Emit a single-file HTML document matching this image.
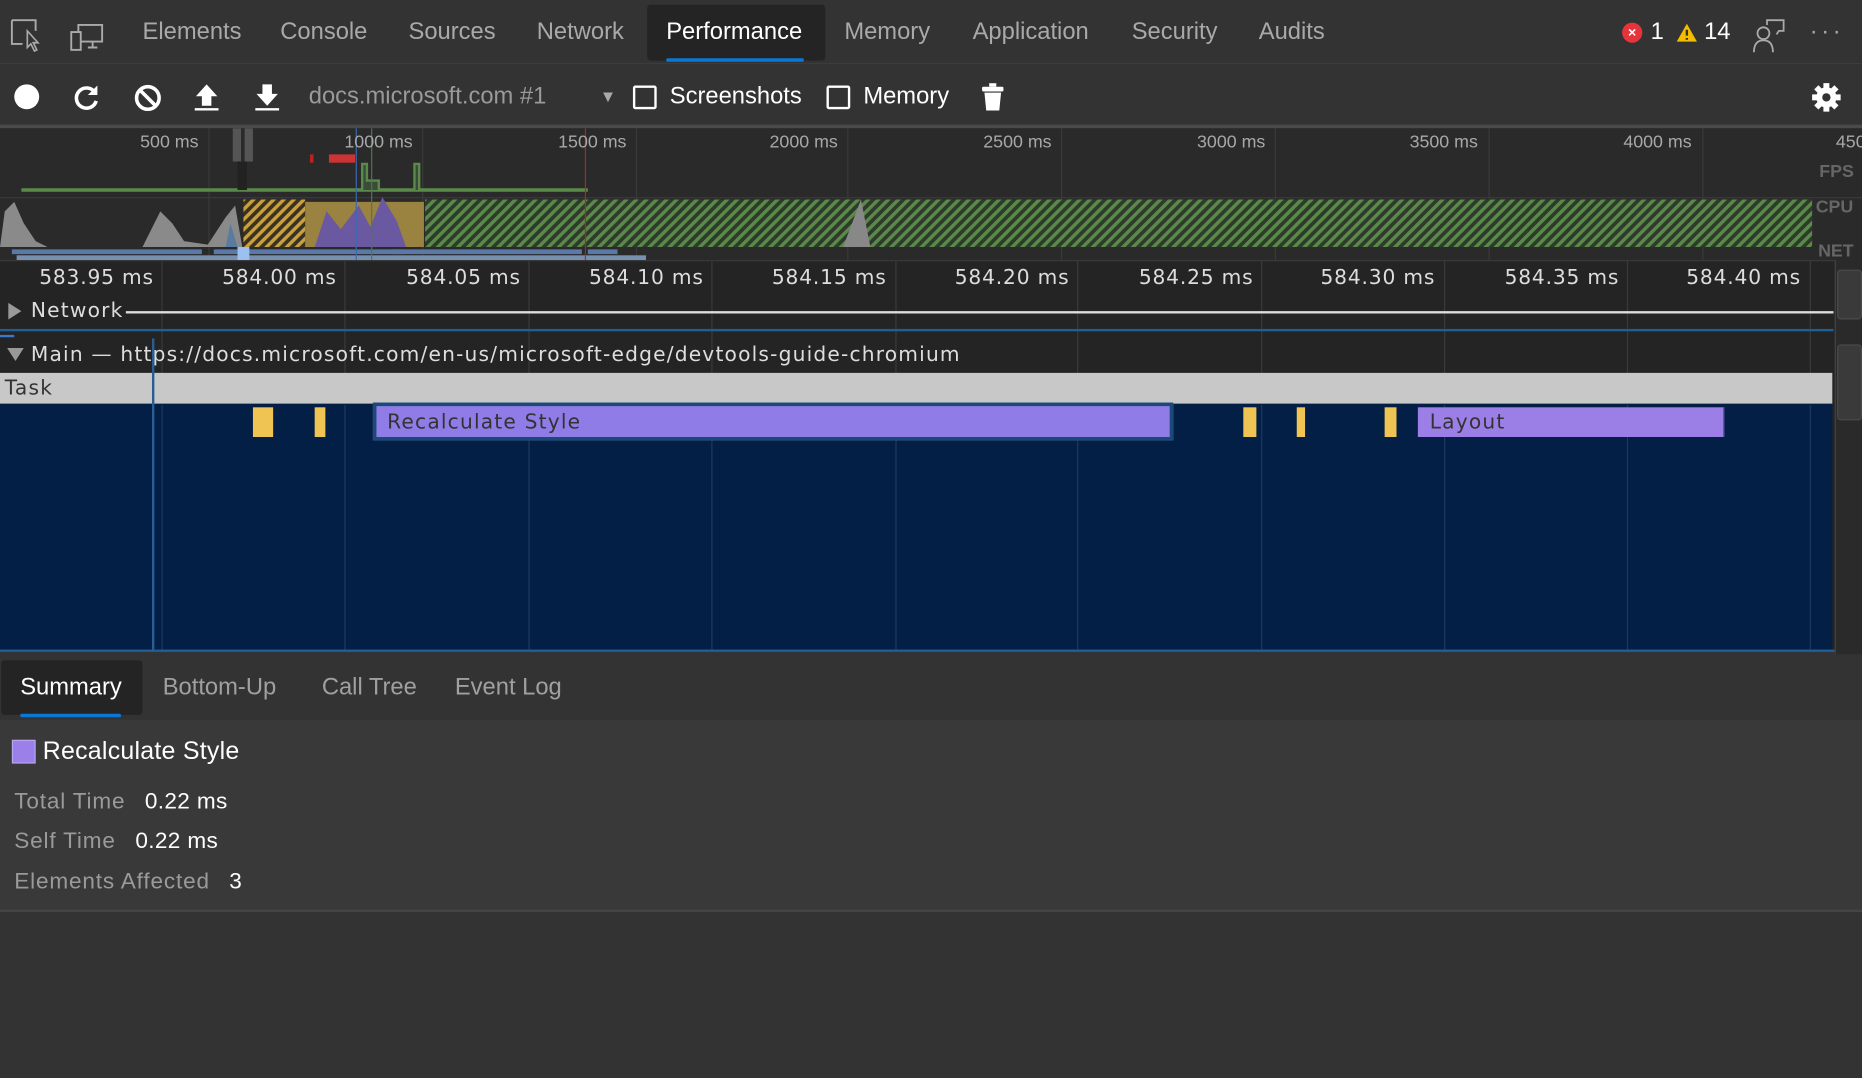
<!DOCTYPE html>
<html><head><meta charset="utf-8"><style>
*{margin:0;padding:0;box-sizing:border-box}
html,body{width:1862px;height:1078px;overflow:hidden;background:#333}
#w{width:1568px;height:908px;transform:scale(1.1875);transform-origin:0 0;position:relative;background:#333;font-family:"Liberation Sans",sans-serif;overflow:hidden}
.a{position:absolute}
.tab{position:absolute;top:16px;font-size:20px;color:#a9a9a9}
.ms{position:absolute;font-size:15px;color:#a8a8a8}
.rl{position:absolute;top:224px;font-family:"DejaVu Sans",sans-serif;font-size:17px;color:#ddd;letter-spacing:0.7px}
.dv{font-family:"DejaVu Sans",sans-serif;font-size:17px;letter-spacing:1px}
.vl{position:absolute;width:1px;background:#3a3a3a}
.fl{position:absolute;top:341px;height:207px;width:1px;background:#1c3a60}
.y{position:absolute;top:343px;height:25px;background:#f0c453}
.sl{position:absolute;font-size:19px;color:#9a9a9a;letter-spacing:0.7px}
.sv{position:absolute;font-size:19px;color:#fff;letter-spacing:0.3px}
</style></head><body><div id="w">
<div class="a" style="left:0;top:0;width:1568px;height:54px;background:#333;border-bottom:1px solid #3c3c3c"></div>
<svg class="a" style="left:6px;top:14px" width="34" height="30" viewBox="0 0 34 30"><path d="M4 3h20v9M4 3v20h9" fill="none" stroke="#aaa" stroke-width="1.6"/><path d="M17 12l0 14 3-3 3 6 2-1-3-6 4 0z" fill="none" stroke="#aaa" stroke-width="1.4"/></svg>
<svg class="a" style="left:58px;top:18px" width="32" height="26" viewBox="0 0 32 26"><rect x="8" y="3" width="20" height="14" fill="none" stroke="#aaa" stroke-width="1.6"/><rect x="2" y="9" width="8" height="15" fill="#333" stroke="#aaa" stroke-width="1.6"/><path d="M16 22h8M20 17v5" stroke="#aaa" stroke-width="1.6"/></svg>
<div class="tab" style="left:120px">Elements</div>
<div class="tab" style="left:236px">Console</div>
<div class="tab" style="left:344px">Sources</div>
<div class="tab" style="left:452px">Network</div>
<div class="a" style="left:545px;top:4px;width:150px;height:47px;background:#242424;border-radius:3px"></div>
<div class="a" style="left:561px;top:49px;width:116px;height:3px;background:#0a78d4;border-radius:2px"></div>
<div class="tab" style="left:561px;color:#fff">Performance</div>
<div class="tab" style="left:711px">Memory</div>
<div class="tab" style="left:819px">Application</div>
<div class="tab" style="left:953px">Security</div>
<div class="tab" style="left:1060px">Audits</div>
<div class="a" style="left:1366px;top:19px;width:17px;height:17px;border-radius:50%;background:#e5343b;color:#fff;font-size:12px;line-height:17px;text-align:center;font-weight:bold">×</div>
<div class="tab" style="left:1390px;color:#fff">1</div>
<svg class="a" style="left:1411px;top:19px" width="19" height="17"><path d="M9.5 1L18 16H1z" fill="#f4bd00"/><path d="M9.5 6v5M9.5 13v1.5" stroke="#333" stroke-width="2"/></svg>
<div class="tab" style="left:1435px;color:#fff">14</div>
<svg class="a" style="left:1472px;top:15px" width="32" height="30" viewBox="0 0 32 30"><circle cx="13" cy="13" r="5" fill="none" stroke="#aaa" stroke-width="1.5"/><path d="M5 29c0-7 3-10 8-10s8 3 8 10" fill="none" stroke="#aaa" stroke-width="1.5"/><path d="M16 6V2h14v9h-4l-2 3" fill="none" stroke="#aaa" stroke-width="1.5"/></svg>
<div class="a" style="left:1524px;top:16px;color:#aaa;font-size:20px;letter-spacing:3px">···</div>
<div class="a" style="left:0;top:105px;width:1568px;height:3px;background:#4a4a4a"></div>
<div class="a" style="left:12px;top:71px;width:21px;height:21px;border-radius:50%;background:#fff"></div>
<svg class="a" style="left:61px;top:70px" width="24" height="24" viewBox="0 0 24 24"><path d="M19 8A8.5 8.5 0 1 0 20 15" fill="none" stroke="#fff" stroke-width="3"/><path d="M21 2v8h-8z" fill="#fff"/></svg>
<svg class="a" style="left:112px;top:70px" width="25" height="25" viewBox="0 0 25 25"><circle cx="12.5" cy="12.5" r="9.5" fill="none" stroke="#fff" stroke-width="3"/><path d="M6 6l13 13" stroke="#fff" stroke-width="3"/></svg>
<svg class="a" style="left:163px;top:70px" width="22" height="24" viewBox="0 0 22 24"><path d="M11 1L20 11H15v8H7v-8H2z" fill="#fff"/><path d="M1 22h20" stroke="#fff" stroke-width="2"/></svg>
<svg class="a" style="left:214px;top:70px" width="22" height="24" viewBox="0 0 22 24"><path d="M11 19L20 9H15V1H7v8H2z" fill="#fff"/><path d="M1 22h20" stroke="#fff" stroke-width="2"/></svg>
<div class="a" style="left:260px;top:70px;font-size:20px;color:#9a9a9a">docs.microsoft.com #1</div>
<div class="a" style="left:505px;top:73px;font-size:14px;color:#aaa">▼</div>
<div class="a" style="left:533px;top:72px;width:20px;height:20px;border:2px solid #fff;border-radius:2px"></div>
<div class="a" style="left:564px;top:70px;font-size:20px;color:#fff">Screenshots</div>
<div class="a" style="left:696px;top:72px;width:20px;height:20px;border:2px solid #fff;border-radius:2px"></div>
<div class="a" style="left:727px;top:70px;font-size:20px;color:#fff">Memory</div>
<svg class="a" style="left:826px;top:70px" width="20" height="24" viewBox="0 0 20 24"><rect x="7" y="0" width="6" height="3" fill="#fff"/><rect x="1" y="3" width="18" height="4" rx="1" fill="#fff"/><path d="M3 8h14l-1.5 15h-11z" fill="#fff"/></svg>
<svg class="a" style="left:1525px;top:69px" width="26" height="26" viewBox="0 0 26 26"><g fill="#fff"><circle cx="13" cy="13" r="8.5"/><rect x="10.5" y="1" width="5" height="24"/><rect x="1" y="10.5" width="24" height="5"/><rect x="10.5" y="1" width="5" height="24" transform="rotate(45 13 13)"/><rect x="10.5" y="1" width="5" height="24" transform="rotate(-45 13 13)"/></g><circle cx="13" cy="13" r="3.5" fill="#333"/></svg>
<div class="a" style="left:0;top:108px;width:1568px;height:112px;background:#2a2a2a"></div>
<svg class="a" style="left:0;top:108px" width="1568" height="112" viewBox="0 0 1568 112">
<defs><pattern id="g" width="6" height="6" patternUnits="userSpaceOnUse" patternTransform="rotate(45)"><rect width="3" height="6" fill="#5a8a4a"/><rect x="3" width="3" height="6" fill="#2e3a2a"/></pattern>
<pattern id="o" width="6" height="6" patternUnits="userSpaceOnUse" patternTransform="rotate(45)"><rect width="3" height="6" fill="#c9a040"/><rect x="3" width="3" height="6" fill="#3a3220"/></pattern></defs>
<g stroke="#3a3a3a"><path d="M176 0v112M356 0v112M536 0v112M714 0v112M894 0v112M1074 0v112M1254 0v112M1434 0v112"/></g>
<rect x="0" y="58" width="1568" height="1" fill="#3a3a3a"/>
<rect x="358" y="60" width="1168" height="40" fill="url(#g)"/>
<rect x="205" y="60" width="52" height="40" fill="url(#o)"/>
<path d="M0 100L4 70 12 62 20 80 30 95 40 100 120 100 135 70 145 80 155 95 175 98 190 75 198 65 204 100z" fill="#8a8a8a"/>
<path d="M257 100V62h100v38z" fill="#9a8240"/>
<path d="M265 100l10-30 12 15 15-20 10 18 10-25 12 20 8 22z" fill="#6a58a0"/>
<path d="M190 100l4-20 6 20z" fill="#5a7aa0"/>
<path d="M710 100l15-40 8 40z" fill="#888"/>
<path d="M18 52h477" stroke="#5a8a4a" stroke-width="3"/>
<path d="M305 52V30h4v14h10v8h30V30h4v22" fill="#3c4a3a" stroke="#5a8a4a" stroke-width="2"/>
<rect x="196" y="0" width="7" height="28" fill="#555"/><rect x="206" y="0" width="7" height="28" fill="#555"/>
<rect x="200" y="28" width="8" height="24" fill="#222"/>
<rect x="261" y="22" width="3" height="7" fill="#b22"/><rect x="277" y="22" width="22" height="7" fill="#c33"/>
<rect x="10" y="102" width="160" height="4" fill="#5a78a8"/><rect x="180" y="102" width="160" height="4" fill="#5a78a8"/><rect x="330" y="102" width="160" height="4" fill="#5a78a8"/><rect x="495" y="102" width="25" height="4" fill="#5a78a8"/>
<rect x="14" y="107" width="530" height="4" fill="#7890b0"/>
<rect x="200" y="100" width="10" height="12" fill="#9cc0f0"/>
<path d="M300 0v112" stroke="#3a6ab0"/><path d="M313 0v112" stroke="#4a7a4a"/><path d="M493 0v112" stroke="#b22"/>
</svg>
<div class="ms" style="left:118px;top:111px">500 ms</div>
<div class="ms" style="left:290px;top:111px">1000 ms</div>
<div class="ms" style="left:470px;top:111px">1500 ms</div>
<div class="ms" style="left:648px;top:111px">2000 ms</div>
<div class="ms" style="left:828px;top:111px">2500 ms</div>
<div class="ms" style="left:1008px;top:111px">3000 ms</div>
<div class="ms" style="left:1187px;top:111px">3500 ms</div>
<div class="ms" style="left:1367px;top:111px">4000 ms</div>
<div class="ms" style="left:1546px;top:111px">450</div>
<div class="ms" style="left:1532px;top:136px;font-weight:bold;color:#666">FPS</div>
<div class="ms" style="left:1529px;top:166px;font-weight:bold;color:#666">CPU</div>
<div class="ms" style="left:1531px;top:203px;font-weight:bold;color:#666">NET</div>
<div class="a" style="left:0;top:219px;width:1545px;height:330px;background:#242424;border-top:1px solid #3a3a3a"></div>
<div class="vl" style="left:136px;top:220px;height:120px"></div><div class="vl" style="left:290px;top:220px;height:120px"></div><div class="vl" style="left:445px;top:220px;height:120px"></div><div class="vl" style="left:599px;top:220px;height:120px"></div><div class="vl" style="left:754px;top:220px;height:120px"></div><div class="vl" style="left:907px;top:220px;height:120px"></div><div class="vl" style="left:1062px;top:220px;height:120px"></div><div class="vl" style="left:1216px;top:220px;height:120px"></div><div class="vl" style="left:1370px;top:220px;height:120px"></div><div class="vl" style="left:1524px;top:220px;height:120px"></div>
<div class="rl" style="left:33px">583.95 ms</div><div class="rl" style="left:187px">584.00 ms</div><div class="rl" style="left:342px">584.05 ms</div><div class="rl" style="left:496px">584.10 ms</div><div class="rl" style="left:650px">584.15 ms</div><div class="rl" style="left:804px">584.20 ms</div><div class="rl" style="left:959px">584.25 ms</div><div class="rl" style="left:1112px">584.30 ms</div><div class="rl" style="left:1267px">584.35 ms</div><div class="rl" style="left:1420px">584.40 ms</div>
<div class="a" style="left:7px;top:255px;width:0;height:0;border-top:7px solid transparent;border-bottom:7px solid transparent;border-left:11px solid #999"></div>
<div class="a dv" style="left:26px;top:252px;color:#ddd">Network</div>
<div class="a" style="left:106px;top:262px;width:1438px;height:2px;background:#ddd"></div>
<div class="a" style="left:0;top:277px;width:1544px;height:2px;background:#1e5f98"></div>
<div class="a" style="left:0;top:282px;width:12px;height:2px;background:#3a78d0"></div>
<div class="a" style="left:6px;top:293px;width:0;height:0;border-left:7px solid transparent;border-right:7px solid transparent;border-top:11px solid #999"></div>
<div class="a dv" style="left:26px;top:289px;color:#ddd">Main — https://docs.microsoft.com/en-us/microsoft-edge/devtools-guide-chromium</div>
<div class="a" style="left:0;top:314px;width:1543px;height:26px;background:#c8c8c8"></div>
<div class="a dv" style="left:4px;top:317px;color:#333">Task</div>
<div class="a" style="left:0;top:340px;width:1543px;height:208px;background:#041f45"></div>
<div class="fl" style="left:136px"></div><div class="fl" style="left:290px"></div><div class="fl" style="left:445px"></div><div class="fl" style="left:599px"></div><div class="fl" style="left:754px"></div><div class="fl" style="left:907px"></div><div class="fl" style="left:1062px"></div><div class="fl" style="left:1216px"></div><div class="fl" style="left:1370px"></div><div class="fl" style="left:1524px"></div>
<div class="y" style="left:213px;width:17px"></div><div class="y" style="left:265px;width:9px"></div>
<div class="y" style="left:1047px;width:11px"></div><div class="y" style="left:1092px;width:7px"></div><div class="y" style="left:1166px;width:10px"></div>
<div class="a" style="left:314px;top:339px;width:674px;height:32px;background:#8f7ce6;border:3px solid #1c4a78"></div>
<div class="a dv" style="left:326px;top:346px;color:#333">Recalculate Style</div>
<div class="a" style="left:1194px;top:343px;width:258px;height:25px;background:#9b7fe6;border-right:1px solid #6050b0"></div>
<div class="a dv" style="left:1204px;top:346px;color:#333">Layout</div>
<div class="a" style="left:128px;top:285px;width:2px;height:264px;background:#2a5e92"></div>
<div class="a" style="left:0;top:547px;width:1545px;height:2px;background:#1e5f98"></div>
<div class="a" style="left:1545px;top:219px;width:23px;height:332px;background:#2a2a2a;border-left:1px solid #444"></div>
<div class="a" style="left:1547px;top:227px;width:21px;height:42px;background:#3a3a3a;border:1px solid #4a4a4a;border-radius:3px"></div>
<div class="a" style="left:1547px;top:290px;width:21px;height:64px;background:#3a3a3a;border:1px solid #4a4a4a;border-radius:3px"></div>
<div class="a" style="left:0;top:551px;width:1568px;height:55px;background:#333"></div>
<div class="a" style="left:1px;top:556px;width:119px;height:46px;background:#242424;border-radius:3px"></div>
<div class="a" style="left:17px;top:601px;width:85px;height:3px;background:#0a78d4;border-radius:2px"></div>
<div class="a" style="left:17px;top:568px;font-size:20px;color:#fff">Summary</div>
<div class="a" style="left:137px;top:568px;font-size:20px;color:#a0a0a0">Bottom-Up</div>
<div class="a" style="left:271px;top:568px;font-size:20px;color:#a0a0a0">Call Tree</div>
<div class="a" style="left:383px;top:568px;font-size:20px;color:#a0a0a0">Event Log</div>
<div class="a" style="left:0;top:606px;width:1568px;height:162px;background:#393939;border-bottom:2px solid #444"></div>
<div class="a" style="left:10px;top:623px;width:20px;height:20px;background:#9a80e8;border:1px solid #b8a4f0"></div>
<div class="a" style="left:36px;top:621px;font-size:21px;color:#fff;letter-spacing:0.2px">Recalculate Style</div>
<div class="sl" style="left:12px;top:665px">Total Time</div><div class="sv" style="left:122px;top:665px">0.22 ms</div>
<div class="sl" style="left:12px;top:698px">Self Time</div><div class="sv" style="left:114px;top:698px">0.22 ms</div>
<div class="sl" style="left:12px;top:732px">Elements Affected</div><div class="sv" style="left:193px;top:732px">3</div>
<div class="a" style="left:0;top:770px;width:1568px;height:138px;background:#333"></div>
</div></body></html>
